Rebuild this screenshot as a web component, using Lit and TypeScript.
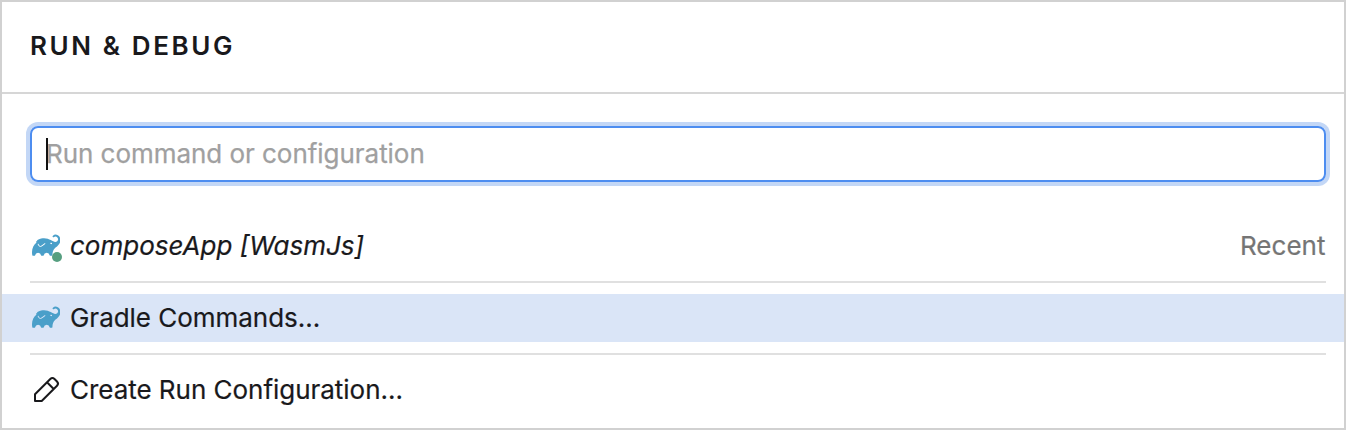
import { LitElement, html, css } from "lit";
import { customElement } from "lit/decorators.js";

const elephant = html`<svg class="elephant" viewBox="0 0 24 24" aria-hidden="true">
  <path fill="#4a9fc9" d="M22.695 4.297a3.807 3.807 0 0 0-5.29-.09.368.368 0 0 0 0 .533l.46.47a.363.363 0 0 0 .474.032 2.182 2.182 0 0 1 2.86 3.291c-3.023 3.02-7.056-5.447-16.211-1.083a1.24 1.24 0 0 0-.534 1.745l1.571 2.713a1.238 1.238 0 0 0 1.681.461l.037-.02-.029.02.688-.384a16.083 16.083 0 0 0 2.193-1.635.384.384 0 0 1 .499-.016.357.357 0 0 1 .016.534 16.435 16.435 0 0 1-2.316 1.741H8.77l-.696.39a1.958 1.958 0 0 1-.963.25 1.987 1.987 0 0 1-1.726-.989L3.9 9.696C1.06 11.72-.686 15.603.26 20.522a.363.363 0 0 0 .354.296h1.675a.363.363 0 0 0 .37-.331 2.478 2.478 0 0 1 4.915 0 .36.36 0 0 0 .357.317h1.638a.363.363 0 0 0 .357-.317 2.478 2.478 0 0 1 4.914 0 .363.363 0 0 0 .358.317h1.627a.363.363 0 0 0 .363-.357c.037-2.294.656-4.93 2.42-6.25 6.108-4.57 4.502-8.486 3.088-9.9zm-6.229 6.901l-1.165-.584a.73.73 0 1 1 1.165.587z"/>
  <path fill="none" stroke="#4a9fc9" stroke-width="1.3" stroke-linecap="round" d="M4.1 9.2l.7 1.2"/>
</svg>`;

const pencil = html`<svg class="pencil" viewBox="0 0 32 32" aria-hidden="true">
  <path fill="none" stroke="#19191c" stroke-width="2" stroke-linejoin="round"
    d="M5 20.3 20.3 5a3 3 0 0 1 4.2 0l2.5 2.5a3 3 0 0 1 0 4.2L11.7 27H5zM17 8.3l6.7 6.7"/>
</svg>`;

@customElement("app-root")
export class AppRoot extends LitElement {
  static styles = css`
    :host {
      display: block;
      box-sizing: border-box;
      height: 430px;
      border: 2px solid #d1d1d1;
      background: #fff;
      color: #19191c;
      font: 26px/48px Inter, sans-serif;
      overflow: hidden;
    }
    .header {
      box-sizing: border-box;
      height: 92px;
      padding: 20px 28px 0;
      border-bottom: 2px solid #d6d6d6;
      font-weight: 600;
      letter-spacing: 2.6px;
    }
    .field {
      box-sizing: border-box;
      display: flex;
      align-items: center;
      height: 56px;
      margin: 32px 18px 40px 28px;
      padding-left: 14px;
      border: 2px solid #4d8df0;
      border-radius: 8px;
      box-shadow: 0 0 0 4px #c3d7f6;
    }
    .caret { width: 2px; height: 32px; margin-right: -2px; background: #111; z-index: 1; }
    .placeholder { color: #a0a0a0; letter-spacing: -0.04px; -webkit-text-stroke: 0.25px #a0a0a0; }
    .row {
      display: flex;
      align-items: center;
      height: 48px;
      padding: 0 18px 0 28px;
      -webkit-text-stroke: 0.2px currentColor;
    }
    .label { letter-spacing: -0.03px; }
    .selected { background: #dae5f7; }
    .icon { position: relative; display: flex; width: 32px; height: 32px; margin-right: 8px; }
    .elephant { width: 28.5px; height: 28.5px; margin: 1px 0 0 1.5px; }
    .pencil { width: 32px; height: 32px; }
    .dot {
      position: absolute;
      left: 22px;
      top: 22px;
      width: 10px;
      height: 10px;
      border-radius: 50%;
      background: #569f80;
    }
    .italic { font-style: italic; }
    .tag { margin-left: auto; padding-right: 0.6px; color: #757575; }
    .rule { height: 2px; margin: 11px 18px 11px 28px; background: #e0e0e0; }
  `;

  render() {
    return html`
      <div class="header">RUN &amp; DEBUG</div>
      <div class="field"><span class="caret"></span><span class="placeholder">Run command or configuration</span></div>
      <div class="row">
        <span class="icon">${elephant}<span class="dot"></span></span>
        <span class="italic">composeApp [WasmJs]</span>
        <span class="tag">Recent</span>
      </div>
      <div class="rule"></div>
      <div class="row selected"><span class="icon">${elephant}</span><span class="label">Gradle Commands...</span></div>
      <div class="rule"></div>
      <div class="row"><span class="icon">${pencil}</span><span class="label">Create Run Configuration...</span></div>
    `;
  }
}
